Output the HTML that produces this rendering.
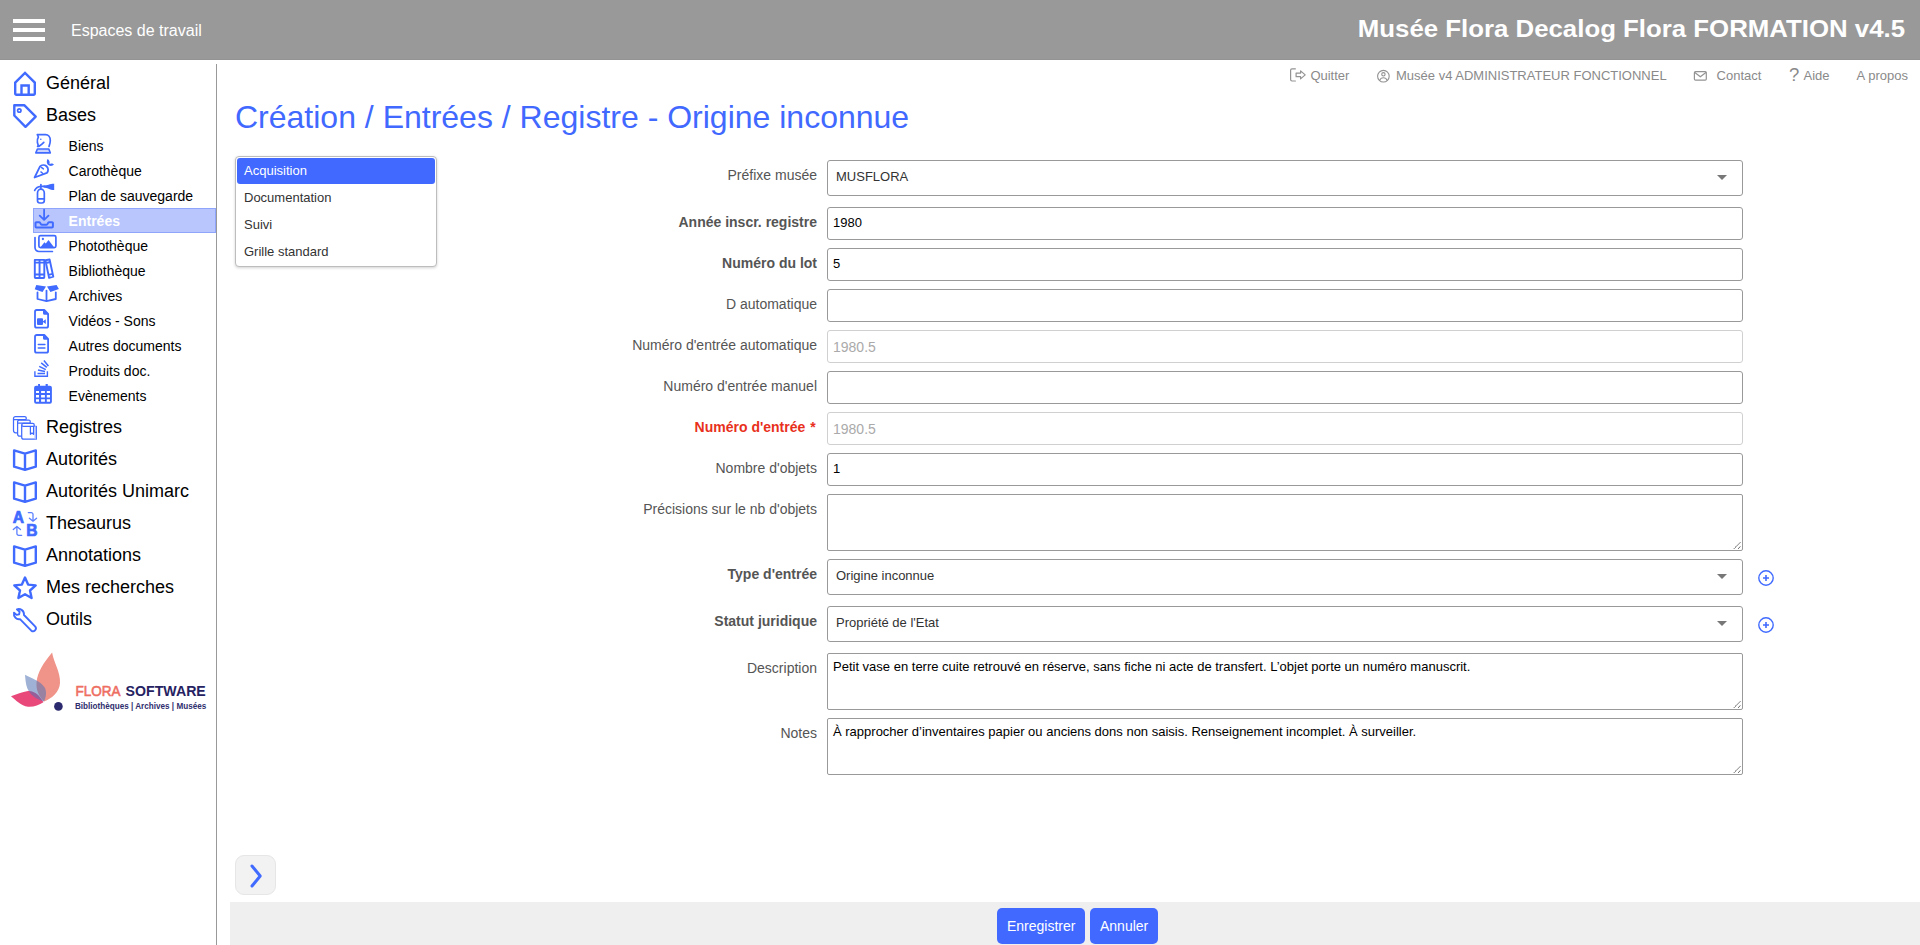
<!DOCTYPE html>
<html lang="fr">
<head>
<meta charset="utf-8">
<title>Création / Entrées / Registre - Origine inconnue</title>
<style>
*{box-sizing:border-box;margin:0;padding:0}
html,body{width:1920px;height:945px;overflow:hidden;background:#fff}
body{font-family:"Liberation Sans",Arial,sans-serif;color:#000;position:relative}
.abs{position:absolute}
#hdr{position:absolute;left:0;top:0;width:1920px;height:60px;background:#999;border-bottom:1px solid #939393}
#hdr .bar{position:absolute;left:13px;width:32px;height:4px;background:#fff}
#ws{position:absolute;left:71px;top:21px;font-size:16px;line-height:20px;color:#fff;white-space:nowrap}
#apptitle{position:absolute;right:15px;top:13px;font-size:24px;line-height:32px;font-weight:bold;color:#fff;white-space:nowrap;transform:scaleX(1.075);transform-origin:100% 50%}
#side{position:absolute;left:0;top:64px;width:217px;height:881px;border-right:1px solid #999}
.m1{position:absolute;left:46px;font-size:18px;line-height:24px;white-space:nowrap;color:#000}
.m2{position:absolute;left:68.6px;font-size:14px;line-height:20px;white-space:nowrap;color:#000}
.ic1{position:absolute;left:11px;width:28px;height:28px}
.ic2{position:absolute;left:32px;width:24px;height:24px}
#sel{position:absolute;left:33px;top:208px;width:183px;height:25px;background:#b8c6fd;border:1px solid #8fa5fb}
svg{display:block;overflow:visible}
.toplnk{position:absolute;top:68.4px;font-size:13px;line-height:16px;color:#8a8a8a;white-space:nowrap}
#h1{position:absolute;left:235px;top:97px;font-size:32px;line-height:40px;color:#4169ff;white-space:nowrap;font-weight:normal}
#tabs{position:absolute;left:235px;top:156px;width:202px;height:111px;border:1px solid #bdbdbd;border-radius:4px;background:#fff;box-shadow:0 1px 3px rgba(0,0,0,.18)}
#tabs div{position:absolute;left:1px;width:198px;height:26px;padding-left:7px;font-size:13px;line-height:26px;color:#333;white-space:nowrap}
#tabs div.on{background:#4169ff;color:#fff;border-radius:3px}
.lbl{position:absolute;right:1103px;font-size:14px;line-height:20px;color:#555;white-space:nowrap;text-align:right}
.lbl.b{font-weight:bold;color:#555}
.lbl.r{font-weight:bold;color:#e8301c}
.fld{position:absolute;left:827px;width:916px;border:1px solid #999;border-radius:3px;background:#fff;font-size:13px;color:#000;white-space:nowrap;padding-left:5px}
.fld.dis{border-color:#d0d0d0;color:#aaa;font-size:14px;padding-left:5px}
.fld.sel{font-size:13px;color:#333;padding-left:8px}
.fld.sel:after{content:"";position:absolute;right:15px;top:14px;border:5px solid transparent;border-top:5px solid #777;border-bottom:none}
.fld.ta{font-size:13px;line-height:15px;padding-top:5px;border-radius:2px}
.fld.ta svg{position:absolute;right:1px;bottom:1px}
#foot{position:absolute;left:230px;top:902px;width:1690px;height:43px;background:#efefef}
.btn{position:absolute;top:908px;height:36px;background:#4169ff;color:#fff;border-radius:5px;font-size:14px;line-height:37px;text-align:left;padding-left:10px;white-space:nowrap}
#exp{position:absolute;left:235px;top:855px;width:41px;height:40px;background:#f2f2f2;border:1px solid #e6e6e6;border-radius:9px}
</style>
</head>
<body>
<!-- HEADER -->
<div id="hdr">
  <div class="bar" style="top:19px"></div>
  <div class="bar" style="top:28px"></div>
  <div class="bar" style="top:37px"></div>
  <div id="ws">Espaces de travail</div>
  <div id="apptitle">Musée Flora Decalog Flora FORMATION v4.5</div>
</div>

<!-- SIDEBAR -->
<div id="side"></div>
<div id="sel"></div>
<svg class="abs" style="left:0;top:0" width="217" height="945" viewBox="0 0 217 945" fill="none" stroke="#416bff" stroke-linecap="round">
<!-- home -->
<path d="M15.2 82.6 L25 72.9 L34.8 82.6 V93.6 a1.2 1.2 0 0 1 -1.2 1.2 H16.4 a1.2 1.2 0 0 1 -1.2 -1.2 Z M21.5 94.8 V85.5 H28.7 V94.8" stroke-width="2.4" stroke-linejoin="miter"/>
<!-- tag -->
<path d="M14.3 105.2 H24.2 L35.7 116.6 L25.5 126.8 L14.3 115.5 Z" stroke-width="2.4" stroke-linejoin="round"/>
<circle cx="19.3" cy="110.5" r="1.7" stroke-width="1.7"/>
<!-- knight -->
<path d="M37.3 134.6 H45.5 C48.5 134.6 50.3 137.3 50.3 140.5 C50.3 143 49.6 144.6 49 146.4 M37.3 134.6 L38.4 137 C37.4 138.6 37.2 140.6 37.4 142.3 C37.6 143.6 38.3 144.6 38.1 145.6 L37.6 146.5 L39 146.3 C40.6 145.2 42.4 143.8 43.8 142.4" stroke-width="1.7" stroke-linejoin="round"/>
<circle cx="40.8" cy="139.3" r="0.8" fill="#416bff" stroke="none"/>
<path d="M37.4 149 H48.8 L50.3 152.9 H35.8 Z" stroke-width="1.6" stroke-linejoin="round" fill="#c9d3fd"/>
<!-- carrot -->
<path d="M34.6 177.5 L39.9 166.6 A4.7 4.7 0 1 1 46.9 172.9 Z" stroke-width="1.8" stroke-linejoin="round"/>
<path d="M41.4 167.4 L43.4 168.9 M40.9 171.9 L42.6 173.2" stroke-width="1.4"/>
<path d="M47.6 164.6 C46.4 162.8 46.6 160.3 47.7 159.1 C49.4 160.1 50.1 162.5 49.4 164 C51 163.1 53.2 163.4 54 164.6 C53 166 50.6 166.4 49.2 165.6 Z" fill="#416bff" stroke="none"/>
<!-- extinguisher -->
<path d="M37.5 193 A3.4 3.9 0 0 1 44.3 193 V200.6 A2.4 2.4 0 0 1 41.9 203 H39.9 A2.4 2.4 0 0 1 37.5 200.6 Z M37.5 198.8 H44.3 M40.9 184.6 V189 M34.7 190.4 C36 187.8 38.4 186.6 40.9 186.4 H45" stroke-width="1.7" stroke-linejoin="round"/>
<path d="M43.5 185.5 C47.5 185.5 49.5 183.9 54.2 183.8 V190 C49.5 189.8 47.5 187.6 43.5 187.4 Z" fill="#416bff" stroke="none"/>
<!-- entrees -->
<path d="M44.1 209.6 V219.6 M39.7 215.6 L44.1 219.9 L48.5 215.6" stroke-width="1.8" stroke-linejoin="round"/>
<path d="M36.4 222.3 H39.4 C40.6 222.3 40.3 224.7 41.8 224.7 H46.5 C48 224.7 47.7 222.3 48.9 222.3 H52 A0.9 0.9 0 0 1 52.9 223.2 V226.5 A0.9 0.9 0 0 1 52 227.4 H36.4 A0.9 0.9 0 0 1 35.5 226.5 V223.2 A0.9 0.9 0 0 1 36.4 222.3 Z" stroke-width="2" stroke-linejoin="round"/>
<!-- phototheque -->
<rect x="38.9" y="235.7" width="17" height="11.9" rx="1.6" stroke-width="1.7"/>
<path d="M35 237.6 V247.6 A3.9 3.9 0 0 0 38.9 251.5 H52.4" stroke-width="1.7"/>
<circle cx="42.9" cy="239" r="1.15" fill="#416bff" stroke="none"/>
<path d="M40.3 247.4 L44.4 242.3 L45.8 243.6 L48.5 240 L54.2 247.4 Z" fill="#416bff" stroke="none"/>
<!-- bibliotheque -->
<path d="M34.8 259.9 H44.3 V277.3 A0.7 0.7 0 0 1 43.6 278 H35.5 A0.7 0.7 0 0 1 34.8 277.3 Z M39.55 259.9 V278 M34.8 262.6 H44.3 M34.8 274.5 H44.3" stroke-width="1.9" stroke-linejoin="round"/>
<path d="M45.4 260.3 L49.6 259.5 L53.3 276.7 L49.1 277.9 Z M46 263 L50.2 262 M48.5 274.9 L52.7 273.9" stroke-width="1.9" stroke-linejoin="round"/>
<!-- archives -->
<path d="M36.3 285 L46 286.5 L42.5 291.9 L34.7 289.3 Z M47 286.5 L56.6 285 L58.9 289.1 L50.4 291.9 Z" fill="#416bff" stroke="none"/>
<path d="M37.5 292.3 V299 L46.5 301.2 L55.8 299 V292.3 M46.5 290.6 V301.2" stroke-width="1.8" stroke-linejoin="round"/>
<!-- file video -->
<path d="M36.7 310 H44.3 L48.1 313.8 V326 a1.7 1.7 0 0 1 -1.7 1.7 H36.7 a1.7 1.7 0 0 1 -1.7 -1.7 V311.7 a1.7 1.7 0 0 1 1.7 -1.7 Z" stroke-width="1.8" stroke-linejoin="round"/><path d="M43 309.6 L48.6 314.8 H44.6 a1.6 1.6 0 0 1 -1.6 -1.6 Z" fill="#416bff" stroke="none"/>
<path d="M38 318.3 H42 A1 1 0 0 1 43 319.3 V321.3 L45.8 319.2 V324.1 L43 322 V324 A1 1 0 0 1 42 325 H38 A1 1 0 0 1 37 324 V319.3 A1 1 0 0 1 38 318.3 Z" fill="#416bff" stroke="none"/>
<!-- file doc -->
<path d="M36.7 335 H44.3 L48.1 338.8 V351 a1.7 1.7 0 0 1 -1.7 1.7 H36.7 a1.7 1.7 0 0 1 -1.7 -1.7 V336.7 a1.7 1.7 0 0 1 1.7 -1.7 Z" stroke-width="1.8" stroke-linejoin="round"/><path d="M43 334.6 L48.6 339.8 H44.6 a1.6 1.6 0 0 1 -1.6 -1.6 Z" fill="#416bff" stroke="none"/>
<path d="M38.3 344.5 H44.9 M38.3 348.1 H44.9" stroke-width="1.5"/>
<!-- stack -->
<path d="M34.9 371.3 V376.3 H47.4 V371.3" stroke-width="1.4" stroke-linecap="butt"/>
<path d="M37.5 373.4 H45 M38 369.9 L45 371.6 M39.2 366.4 L45.8 369.6 M41.2 362.9 L46.8 367.3 M43.9 360.5 L48.4 366" stroke-width="1.5" stroke-linecap="butt"/>
<!-- calendar -->
<path d="M36.1 385.8 H49.9 A2 2 0 0 1 51.9 387.8 V401.8 A2 2 0 0 1 49.9 403.8 H36.1 A2 2 0 0 1 34.1 401.8 V387.8 A2 2 0 0 1 36.1 385.8 Z M38.1 384 H40 V386 H38.1 Z M45.6 384 H47.8 V386 H45.6 Z" fill="#416bff" stroke="none"/>
<path d="M36 391 H39 V393.1 H36 Z M41.1 391 H44.9 V393.1 H41.1 Z M46.8 391 H50 V393.1 H46.8 Z M36 395.1 H39 V397.6 H36 Z M41.1 395.1 H44.9 V397.6 H41.1 Z M46.8 395.1 H50 V397.6 H46.8 Z M36 399.3 H39 V401.7 H36 Z M41.1 399.3 H44.9 V401.7 H41.1 Z M46.8 399.3 H50 V401.7 H46.8 Z" fill="#fff" stroke="none"/>
<!-- registres -->
<g stroke-width="1.25" stroke-linejoin="round">
<path d="M26.2 419 V418 A1.4 1.4 0 0 0 24.8 416.6 H15.4 A1.9 1.9 0 0 0 13.5 418.5 V430.6 A2.2 2.2 0 0 0 15.7 432.8 H17 M13.7 419.6 H26"/>
<path d="M30.2 422.4 V421.4 A1.4 1.4 0 0 0 28.8 420 H19.5 A1.9 1.9 0 0 0 17.6 421.9 V434 A2.2 2.2 0 0 0 19.8 436.2 H21 M17.8 423 H30"/>
<path d="M34.2 426 V424.8 A1.4 1.4 0 0 0 32.8 423.4 H23.6 A1.9 1.9 0 0 0 21.7 425.3 V437.2 A2 2 0 0 0 23.7 439.2 H36.3 V426.3 H23.4 A1.7 1.7 0 0 1 21.7 424.8 M30.4 426.4 V434.3 L32 433 L33.6 434.3 V426.4"/>
<path d="M35.2 426.6 V438.9" stroke-width="1.3" stroke="#a9b9ff"/>
</g>
<!-- books open -->
<path d="M14.1 450.4 L25 453.6 L35.8 450.4 V466.7 L25 469.9 L14.1 466.7 Z M25 453.6 V469.9" stroke-width="2.4" stroke-linejoin="round"/>
<path d="M14.1 482.4 L25 485.6 L35.8 482.4 V498.7 L25 501.9 L14.1 498.7 Z M25 485.6 V501.9" stroke-width="2.4" stroke-linejoin="round"/>
<path d="M14.1 546.4 L25 549.6 L35.8 546.4 V562.7 L25 565.9 L14.1 562.7 Z M25 549.6 V565.9" stroke-width="2.4" stroke-linejoin="round"/>
<!-- thesaurus -->
<text x="12.8" y="522.9" font-family="Liberation Sans, sans-serif" font-weight="bold" font-size="15.6" fill="#416bff" stroke="#416bff" stroke-width="0.7">A</text>
<text x="26.2" y="536" font-family="Liberation Sans, sans-serif" font-weight="bold" font-size="15.6" fill="#416bff" stroke="#416bff" stroke-width="0.7">B</text>
<path d="M28.3 512.6 H31.2 A1.8 1.8 0 0 1 33 514.4 V520.8 M29.4 518.2 L33 521.2 L36.6 518.2" stroke-width="1.3" stroke="#5c80ff" stroke-linejoin="round"/>
<path d="M21.7 535.3 H18.7 A1.8 1.8 0 0 1 16.9 533.5 V527 M13.3 529.6 L16.9 526.5 L20.5 529.6" stroke-width="1.3" stroke="#5c80ff" stroke-linejoin="round"/>
<!-- star -->
<path d="M25.0 577.6 L28.1 584.6 L35.7 585.4 L30.0 590.5 L31.6 598.0 L25.0 594.2 L18.4 598.0 L20.0 590.5 L14.3 585.4 L21.9 584.6Z" stroke-width="2.4" stroke-linejoin="round"/>
<!-- wrench -->
<path d="M16.9 609.3 C20.5 608.3 24.3 610.6 24 615 L35.3 626.6 A2.9 2.9 0 0 1 31.3 630.7 L20 619.2 C16.3 619.9 13.3 616.4 14 612.6 L16.6 614.9 L19.1 614.3 L19.6 611.8 Z" stroke-width="1.9" stroke-linejoin="round"/>
</svg>
<div class="m1" style="top:71px">Général</div>
<div class="m1" style="top:103px">Bases</div>
<div class="m2" style="top:136px">Biens</div>
<div class="m2" style="top:161px">Carothèque</div>
<div class="m2" style="top:186px">Plan de sauvegarde</div>
<div class="m2" style="top:211px;color:#fff;font-weight:bold">Entrées</div>
<div class="m2" style="top:236px">Photothèque</div>
<div class="m2" style="top:261px">Bibliothèque</div>
<div class="m2" style="top:286px">Archives</div>
<div class="m2" style="top:311px">Vidéos - Sons</div>
<div class="m2" style="top:336px">Autres documents</div>
<div class="m2" style="top:361px">Produits doc.</div>
<div class="m2" style="top:386px">Evènements</div>
<div class="m1" style="top:415px">Registres</div>
<div class="m1" style="top:447px">Autorités</div>
<div class="m1" style="top:479px">Autorités Unimarc</div>
<div class="m1" style="top:511px">Thesaurus</div>
<div class="m1" style="top:543px">Annotations</div>
<div class="m1" style="top:575px">Mes recherches</div>
<div class="m1" style="top:607px">Outils</div>
<svg class="abs" style="left:0;top:645px" width="217" height="80" viewBox="0 645 217 80">
<path d="M52.1 652.4 C53.5 662 60.6 672 60 683 C59.5 692 52 698.5 44 701.4 C36.5 694 35.5 686 37.2 678 C39.5 668 47 658.5 52.1 652.4 Z" fill="#f09389"/>
<path d="M11 696.3 C16.5 694.5 22 691.8 28 691 C35 690.6 40 696 43.4 702.2 C39 705 33.5 707.3 28 706.8 C21 706 15.5 700 11 696.3 Z" fill="#e8487a"/>
<path d="M25 674.7 C31 678.3 40.5 680.5 45 688 C47 692.5 45.8 698 44 701.4 C36 699.5 29.5 694 27.2 688 C25.6 683.5 25.4 679 25 674.7 Z" fill="#5073b4" fill-opacity="0.55"/>
<circle cx="58.4" cy="706.4" r="4.3" fill="#2b2a6e"/>
<text x="75.6" y="695.5" font-family="Liberation Sans, sans-serif" font-size="14.6" fill="#ee6e62" stroke="#ee6e62" stroke-width="0.6" textLength="45" lengthAdjust="spacingAndGlyphs">FLORA</text>
<text x="125.6" y="695.5" font-family="Liberation Sans, sans-serif" font-size="14.6" font-weight="bold" fill="#262262" textLength="80.2" lengthAdjust="spacingAndGlyphs">SOFTWARE</text>
<text x="74.9" y="709.4" font-family="Liberation Sans, sans-serif" font-size="8.4" font-weight="bold" fill="#2f2e6e" textLength="131.4" lengthAdjust="spacingAndGlyphs">Bibliothèques | Archives | Musées</text>
</svg>

<!-- TOP LINKS -->
<div class="toplnk" style="left:1310.4px">Quitter</div>
<div class="toplnk" style="left:1396px">Musée v4 ADMINISTRATEUR FONCTIONNEL</div>
<div class="toplnk" style="left:1716.6px">Contact</div>
<div class="toplnk" style="left:1789px;top:65px;font-size:18.5px;line-height:20px">?</div>
<div class="toplnk" style="left:1803.5px">Aide</div>
<div class="toplnk" style="left:1856.6px">A propos</div>
<svg class="abs" style="left:1280px;top:62px" width="640" height="30" viewBox="1280 62 640 30" fill="none" stroke="#939393" stroke-width="1.2" stroke-linejoin="round" stroke-linecap="round">
<path d="M1295.4 68.8 H1292 A1.4 1.4 0 0 0 1290.6 70.2 V79.6 A1.4 1.4 0 0 0 1292 81 H1295.4"/>
<path d="M1296.1 73.1 H1300.6 V70.9 L1305.2 74.9 L1300.6 78.9 V76.7 H1296.1 Z"/>
<circle cx="1383.4" cy="76.2" r="5.8" stroke-width="1.1"/>
<circle cx="1383.4" cy="74.3" r="1.7" stroke-width="1.1"/>
<path d="M1379.7 80.4 C1380.4 78.3 1382 77.7 1383.4 77.7 C1384.8 77.7 1386.4 78.3 1387.1 80.4" stroke-width="1.1"/>
<rect x="1694.4" y="71.6" width="11.9" height="8.6" rx="1.1"/>
<path d="M1694.8 72.6 L1700.35 76.8 L1705.9 72.6"/>
</svg>

<h1 id="h1">Création / Entrées / Registre - Origine inconnue</h1>

<!-- TABS -->
<div id="tabs">
  <div class="on" style="top:1px">Acquisition</div>
  <div style="top:28px">Documentation</div>
  <div style="top:55px">Suivi</div>
  <div style="top:82px">Grille standard</div>
</div>

<!-- FORM -->
<div class="lbl" style="top:165px">Préfixe musée</div>
<div class="fld sel" style="top:160px;height:36px;line-height:32px">MUSFLORA</div>
<div class="lbl b" style="top:212px">Année inscr. registre</div>
<div class="fld" style="top:207px;height:33px;line-height:30px">1980</div>
<div class="lbl b" style="top:253px">Numéro du lot</div>
<div class="fld" style="top:248px;height:33px;line-height:30px">5</div>
<div class="lbl" style="top:294px">D automatique</div>
<div class="fld" style="top:289px;height:33px;line-height:30px"></div>
<div class="lbl" style="top:335px">Numéro d'entrée automatique</div>
<div class="fld dis" style="top:330px;height:33px;line-height:33px">1980.5</div>
<div class="lbl" style="top:376px">Numéro d'entrée manuel</div>
<div class="fld" style="top:371px;height:33px;line-height:30px"></div>
<div class="lbl r" style="top:417px">Numéro d'entrée <span style="margin:0 1.2px">*</span></div>
<div class="fld dis" style="top:412px;height:33px;line-height:33px">1980.5</div>
<div class="lbl" style="top:458px">Nombre d'objets</div>
<div class="fld" style="top:453px;height:33px;line-height:30px">1</div>
<div class="lbl" style="top:499px">Précisions sur le nb d'objets</div>
<div class="fld ta" style="top:494px;height:57px"><svg width="9" height="9" viewBox="0 0 9 9" fill="none" stroke="#3c3c3c" stroke-width="1" stroke-dasharray="1.1 0.4"><path d="M2 8.7 L8.7 2 M6.2 8.7 L8.7 6.2"/></svg></div>
<div class="lbl b" style="top:564px">Type d'entrée</div>
<div class="fld sel" style="top:559px;height:36px;line-height:32px">Origine inconnue</div>
<div class="lbl b" style="top:611px">Statut juridique</div>
<div class="fld sel" style="top:606px;height:36px;line-height:32px">Propriété de l'Etat</div>
<div class="lbl" style="top:658px">Description</div>
<div class="fld ta" style="top:653px;height:57px">Petit vase en terre cuite retrouvé en réserve, sans fiche ni acte de transfert. L’objet porte un numéro manuscrit.<svg width="9" height="9" viewBox="0 0 9 9" fill="none" stroke="#3c3c3c" stroke-width="1" stroke-dasharray="1.1 0.4"><path d="M2 8.7 L8.7 2 M6.2 8.7 L8.7 6.2"/></svg></div>
<div class="lbl" style="top:723px">Notes</div>
<div class="fld ta" style="top:718px;height:57px">À rapprocher d’inventaires papier ou anciens dons non saisis. Renseignement incomplet. À surveiller.<svg width="9" height="9" viewBox="0 0 9 9" fill="none" stroke="#3c3c3c" stroke-width="1" stroke-dasharray="1.1 0.4"><path d="M2 8.7 L8.7 2 M6.2 8.7 L8.7 6.2"/></svg></div>
<svg class="abs" style="left:1756px;top:568px" width="20" height="70" viewBox="1756 568 20 70" fill="none" stroke="#416bff" stroke-width="1.4">
<circle cx="1766" cy="578" r="7.2"/><path d="M1763 578 H1769 M1766 575 V581" stroke-width="1.6"/>
<circle cx="1766" cy="625" r="7.2"/><path d="M1763 625 H1769 M1766 622 V628" stroke-width="1.6"/>
</svg>

<!-- FOOTER -->
<div id="exp"><svg class="abs" style="left:-1px;top:-1px" width="41" height="40" viewBox="235 855 41 40" fill="none" stroke="#416bff" stroke-width="3" stroke-linecap="round" stroke-linejoin="round"><path d="M252 866 L260.2 876 L252 886"/></svg></div>
<div id="foot"></div>
<div class="btn" style="left:997px;width:88px">Enregistrer</div>
<div class="btn" style="left:1090px;width:68px">Annuler</div>
</body>
</html>
